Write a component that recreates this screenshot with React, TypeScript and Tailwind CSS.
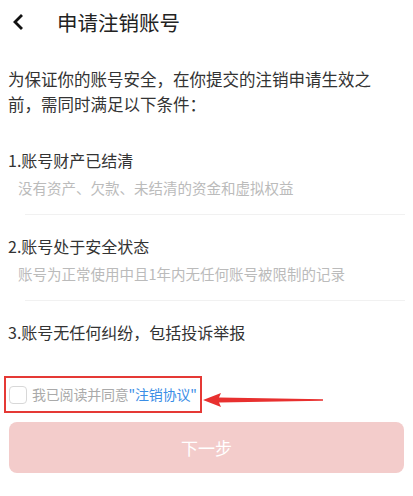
import { useState } from 'react'

interface ConditionProps {
  title: string
  desc?: string
  divider?: boolean
}

function Condition({ title, desc, divider }: ConditionProps) {
  return (
    <div>
      <p className="text-[16px] leading-[22px] text-[#333]">{title}</p>
      {desc && (
        <p className="mt-[7px] pl-[10px] text-[14.5px] leading-[20px] text-[#bbb]">
          {desc}
        </p>
      )}
      {divider && <div className="ml-[17px] mt-[16px] h-px bg-[#f1f1f1]" />}
    </div>
  )
}

export default function App() {
  const [agreed, setAgreed] = useState(false)

  return (
    <div className="h-[496px] w-[413px] bg-white font-['Noto_Sans_CJK_SC',sans-serif]">
      <header className="flex h-[44px] items-center pl-[12px]">
        <svg width="12" height="16" viewBox="0 0 12 16" className="text-[#111]">
          <path
            d="M9 2 L3 8 L9 14"
            fill="none"
            stroke="currentColor"
            strokeWidth="2.8"
            strokeLinecap="square"
          />
        </svg>
        <h1 className="ml-[33px] text-[20.5px] text-[#222]">申请注销账号</h1>
      </header>

      <p className="mt-[23px] pl-[8px] pr-[30px] text-[16.5px] leading-[25px] text-[#333]">
        为保证你的账号安全，在你提交的注销申请生效之前，需同时满足以下条件：
      </p>

      <div className="mt-[32px] flex flex-col gap-[20px] px-[8px]">
        <Condition title="1.账号财产已结清" desc="没有资产、欠款、未结清的资金和虚拟权益" divider />
        <Condition title="2.账号处于安全状态" desc="账号为正常使用中且1年内无任何账号被限制的记录" divider />
        <Condition title="3.账号无任何纠纷，包括投诉举报" />
      </div>

      <div className="mt-[33px] flex items-start">
        <label className="ml-[4px] flex h-[37px] w-[198px] cursor-pointer items-center gap-[5px] whitespace-nowrap border-[2.5px] border-[#e53935] pl-[3px]">
          <input
            type="checkbox"
            checked={agreed}
            onChange={(e) => setAgreed(e.target.checked)}
            className="h-[18px] w-[18px] shrink-0 appearance-none rounded-[4px] border border-[#d8d8d8] bg-white"
          />
          <span className="text-[14px] tracking-[-0.2px] text-[#aaa]">
            我已阅读并同意<span className="text-[#3a8ee6]">"注销协议"</span>
          </span>
        </label>
        <svg width="124" height="16" viewBox="0 0 124 16" className="ml-[1px] mt-[16px]">
          <path d="M0 8 L18 1 L16 5.5 L120 7.2 L120 8.8 L16 10.5 L18 15 Z" fill="#e8302f" />
        </svg>
      </div>

      <div className="mt-[9px] px-[9px]">
        <button
          disabled={!agreed}
          className="h-[51px] w-full rounded-[8px] bg-[#f3cccb] text-[17px] text-white"
        >
          下一步
        </button>
      </div>
    </div>
  )
}
